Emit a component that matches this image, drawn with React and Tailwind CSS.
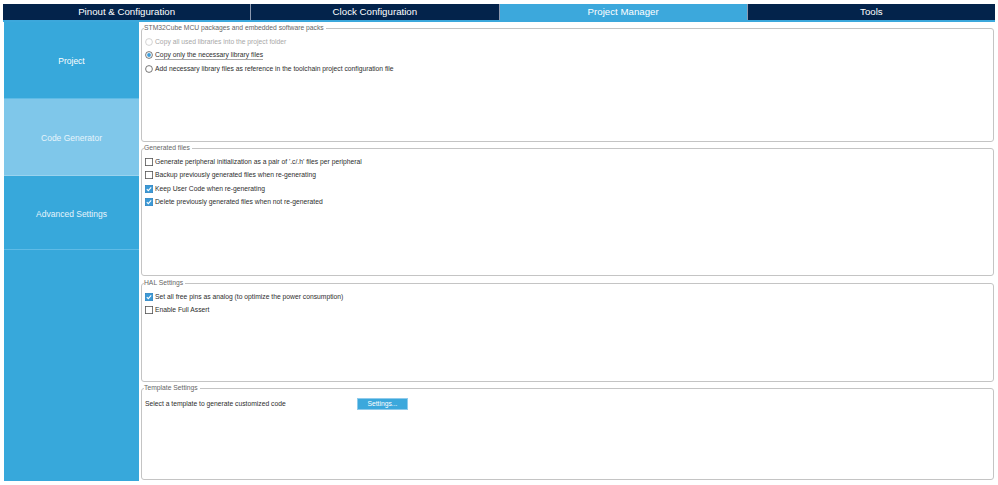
import React from "react";

const tabs = [
  { label: "Pinout & Configuration", active: false },
  { label: "Clock Configuration", active: false },
  { label: "Project Manager", active: true },
  { label: "Tools", active: false },
];

function Radio({ checked, disabled }) {
  return (
    <svg width="8" height="8" viewBox="0 0 8 8" className="shrink-0">
      <circle cx="4" cy="4" r="3.4" fill="white" stroke={disabled ? "#c8c8c8" : "#555"} strokeWidth="0.8" />
      {checked && <circle cx="4" cy="4" r="1.9" fill="#3c9ddb" />}
    </svg>
  );
}

function Check({ checked }) {
  if (checked) {
    return (
      <svg width="8" height="8" viewBox="0 0 8 8" className="shrink-0">
        <rect x="0.4" y="0.4" width="7.2" height="7.2" fill="#3b99d6" stroke="#2f86c4" strokeWidth="0.8" />
        <path d="M1.8 4.1 L3.3 5.6 L6.2 2.3" fill="none" stroke="white" strokeWidth="1.1" />
      </svg>
    );
  }
  return (
    <svg width="8" height="8" viewBox="0 0 8 8" className="shrink-0">
      <rect x="0.4" y="0.4" width="7.2" height="7.2" fill="white" stroke="#555" strokeWidth="0.8" />
    </svg>
  );
}

function Row({ children, label, muted, focus }) {
  return (
    <div className="flex items-center gap-[2px] h-[13.5px] ml-[1px]">
      {children}
      <span
        className={
          (muted ? "text-[#a8a8a8] " : "text-[#2e2e2e] ") +
          (focus ? "border-b border-[#a8a8a8] leading-[8px]" : "leading-[8px]")
        }
      >
        {label}
      </span>
    </div>
  );
}

function Panel({ title, height, children }) {
  return (
    <fieldset
      className="border border-[#c4c4c4] rounded-[3px] pl-[2px] pr-[2px] pt-[3px] shrink-0"
      style={{ height }}
    >
      <legend className="text-[#666] leading-[8px] pr-[2px]">{title}</legend>
      {children}
    </fieldset>
  );
}

export default function App() {
  return (
    <div
      className="w-[998px] h-[485px] bg-white overflow-hidden text-[6.75px]"
      style={{ fontFamily: '"Liberation Sans", Arial, sans-serif' }}
    >
      {/* Top tabs */}
      <div className="pt-[4px] px-[3px]">
        <div className="flex h-[16px]">
          {tabs.map((t, i) => (
            <div
              key={t.label}
              className={
                "flex-1 flex items-center justify-center text-white text-[9.7px] pt-[1px] " +
                (t.active ? "bg-[#3ca8dc] " : "bg-[#03234b] ") +
                (i > 0 ? "border-l border-[#8d9ab0]" : "")
              }
            >
              {t.label}
            </div>
          ))}
        </div>
        <div className="h-[2px] bg-[#3ca8dc]" />
      </div>

      <div className="flex pl-[4px]">
        {/* Sidebar */}
        <div className="w-[135px] h-[459px] bg-[#37a8db] flex flex-col text-[8.5px]">
          <div className="h-[77px] flex items-center justify-center pt-[3px] text-white border-b border-[#5fbbe6]">
            Project
          </div>
          <div className="h-[77px] flex items-center justify-center pt-[2px] text-[#e6f4fb] bg-[#7fc7ea] border-b border-[#9ad3ee]">
            Code Generator
          </div>
          <div className="h-[74px] flex items-center justify-center pt-[3px] text-[#e6f4fb] border-b border-[#5fbbe6]">
            Advanced Settings
          </div>
        </div>

        {/* Content */}
        <div className="ml-[2px] w-[853px] flex flex-col pt-[2px]">
          <Panel title="STM32Cube MCU packages and embedded software packs" height={118}>
            <Row label="Copy all used libraries into the project folder" muted>
              <Radio disabled />
            </Row>
            <Row label="Copy only the necessary library files" focus>
              <Radio checked />
            </Row>
            <Row label="Add necessary library files as reference in the toolchain project configuration file">
              <Radio />
            </Row>
          </Panel>

          <div className="h-[2px] shrink-0" />
          <Panel title="Generated files" height={132}>
            <Row label="Generate peripheral initialization as a pair of '.c/.h' files per peripheral">
              <Check />
            </Row>
            <Row label="Backup previously generated files when re-generating">
              <Check />
            </Row>
            <Row label="Keep User Code when re-generating">
              <Check checked />
            </Row>
            <Row label="Delete previously generated files when not re-generated">
              <Check checked />
            </Row>
          </Panel>

          <div className="h-[3px] shrink-0" />
          <Panel title="HAL Settings" height={103}>
            <Row label="Set all free pins as analog (to optimize the power consumption)">
              <Check checked />
            </Row>
            <Row label="Enable Full Assert">
              <Check />
            </Row>
          </Panel>

          <div className="h-[2px] shrink-0" />
          <Panel title="Template Settings" height={96}>
            <div className="flex items-center h-[18px] ml-[1px]">
              <span className="w-[212px] text-[#2e2e2e]">Select a template to generate customized code</span>
              <div className="w-[51px] h-[12px] bg-[#3ca8dc] border border-[#8fcbec] text-white flex items-center justify-center">
                Settings...
              </div>
            </div>
          </Panel>
        </div>
      </div>
    </div>
  );
}
